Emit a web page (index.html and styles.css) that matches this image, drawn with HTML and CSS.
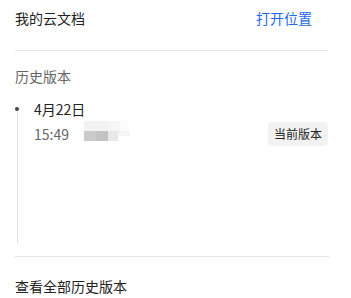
FILE: index.html
```html
<!DOCTYPE html>
<html lang="zh-CN">
<head>
<meta charset="utf-8">
<link rel="stylesheet" href="styles.css">
</head>
<body>
<div class="panel">
  <div class="header">
    <span class="title">我的云文档</span>
    <a class="open-link">打开位置</a>
  </div>
  <div class="divider"></div>
  <div class="section-label">历史版本</div>
  <div class="timeline">
    <div class="rail">
      <span class="dot"></span>
      <span class="line"></span>
    </div>
    <div class="entries">
      <div class="entry">
        <div class="date">4月22日</div>
        <div class="meta">
          <span class="time">15:49</span>
          <span class="blur">
            <span class="b-row top"><i class="c1"></i><i class="c1"></i><i class="c2"></i><i class="c3"></i></span>
            <span class="b-row bottom"><i class="c4"></i><i class="c5"></i><i class="c2"></i><i class="c3"></i></span>
          </span>
          <span class="badge">当前版本</span>
        </div>
      </div>
    </div>
  </div>
  <div class="divider bottom-divider"></div>
  <div class="footer-link">查看全部历史版本</div>
</div>
</body>
</html>
```

FILE: styles.css
```css
html, body {
  margin: 0;
  padding: 0;
  background: #ffffff;
}

body {
  font-family: "Noto Sans CJK SC", "Liberation Sans", sans-serif;
  color: #222222;
  font-size: 14px;
}

.panel {
  width: 313px;
  padding: 0 0 0 15px;
}

.header {
  display: flex;
  justify-content: space-between;
  align-items: center;
  height: 36px;
}

.title {
  font-size: 14px;
  line-height: 20px;
  color: #222222;
}

.open-link {
  font-size: 14px;
  line-height: 20px;
  color: #2468f2;
  padding-right: 16px;
  cursor: pointer;
}

.divider {
  height: 1px;
  background: #e4e4e4;
  margin-top: 14px;
}

.section-label {
  margin-top: 15px;
  font-size: 14px;
  line-height: 20px;
  color: #666666;
}

.timeline {
  display: flex;
  margin-top: 8px;
  height: 149px;
}

.rail {
  width: 19px;
  position: relative;
}

.dot {
  position: absolute;
  left: 0;
  top: 13px;
  width: 4px;
  height: 4px;
  border-radius: 50%;
  background: #444444;
}

.line {
  position: absolute;
  left: 1.5px;
  top: 17px;
  width: 1px;
  bottom: 0;
  background: #e0e0e0;
}

.entries {
  flex: 1;
  padding-top: 5px;
}

.date {
  font-size: 14px;
  line-height: 20px;
  color: #222222;
}

.meta {
  display: flex;
  align-items: center;
  margin-top: 3px;
  height: 24px;
}

.time {
  font-size: 14px;
  line-height: 20px;
  color: #666666;
}

.blur {
  display: flex;
  flex-direction: column;
  align-self: flex-start;
  margin-left: 15px;
  margin-top: -1px;
}

.b-row {
  display: flex;
}

.b-row i {
  display: block;
  width: 12px;
  height: 10px;
}

.top .c1 { background: #f3f3f3; }
.top .c2 { background: #f6f6f6; }
.top .c3 { background: #fbfbfb; width: 8px; }
.c4 { background: #cbcbcb; }
.c5 { background: #c3c3c3; width: 13px; }
.bottom .c2 { background: #e8e8e8; width: 10px; }
.bottom .c3 { background: #f5f5f5; height: 5px; }

.badge {
  margin-left: auto;
  background: #f2f2f2;
  border-radius: 4px;
  font-size: 12px;
  line-height: 24px;
  padding: 0 6px;
  color: #222222;
}

.bottom-divider {
  margin-top: 13px;
  width: 314px;
}

.footer-link {
  margin-top: 19px;
  font-size: 14px;
  line-height: 20px;
  color: #222222;
}
```
